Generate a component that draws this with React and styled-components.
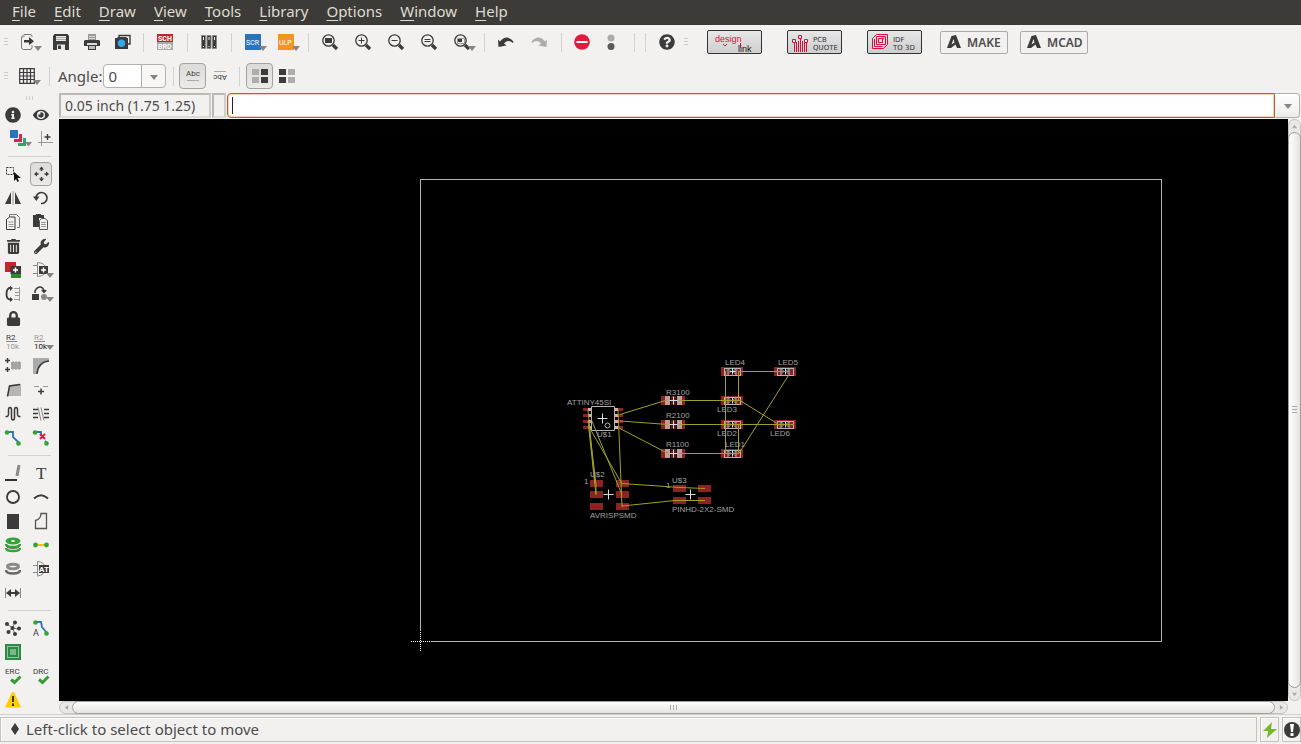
import React, { useState } from 'react';
import styled, { createGlobalStyle, css } from 'styled-components';
import { FaEye, FaInfoCircle, FaLock, FaQuestionCircle, FaTrashAlt, FaWrench } from 'react-icons/fa';

const GlobalStyle = createGlobalStyle`
	html, body, #root {
		height: 100%;
	}
	body {
		margin: 0;
		background: #f2f1f0;
		color: #4c4c4c;
		font-family: "Noto Sans", "Open Sans", sans-serif;
		font-size: 15px;
	}
	* {
		box-sizing: border-box;
	}
	button, input, select {
		font: inherit;
		color: inherit;
	}
	button {
		padding: 0;
		border: none;
		background: none;
	}
	svg {
		display: block;
		flex: none;
		overflow: visible;
	}
`;

const Window = styled.div`
	display: flex;
	flex-direction: column;
	height: 100vh;
	overflow: hidden;
`;

const MenuBar = styled.nav`
	display: flex;
	flex: none;
	height: 25px;
	padding: 0 0 2px 3px;
	background: #3c3b37;
	color: #dfdbd2;
`;

const MenuItem = styled.button`
	padding: 0 9px;
	line-height: 23px;
	u {
		text-underline-offset: 3px;
	}
`;

const ToolBar = styled.div`
	display: flex;
	flex: none;
	align-items: center;
	height: 34px;
	padding-left: 4px;
`;

const Grip = styled.div`
	width: 4px;
	height: 8px;
	margin-right: ${(p) => p.$space || 0}px;
	background: repeating-linear-gradient(#cfcdca 0 1px, #f2f1f0 1px 3px);
`;

const Separator = styled.div`
	width: 1px;
	height: 19px;
	margin: 0 ${(p) => p.$gap || 5}px;
	background: #d3d1cf;
`;

const pressedLook = css`
	border: 1px solid #a5a29e;
	border-radius: 4px;
	background: linear-gradient(#dddbd9, #ebeae8);
`;

const ToolButton = styled.button`
	position: relative;
	display: flex;
	flex: none;
	align-items: center;
	width: ${(p) => (p.$tight ? 31 : 33)}px;
	height: 26px;
	padding-left: 8px;
`;

const Toggle = styled.button`
	display: flex;
	align-items: center;
	justify-content: center;
	width: 27px;
	height: 26px;
	${(p) => p.$pressed && pressedLook}
`;

const Arrow = styled.span`
	position: absolute;
	right: ${(p) => p.$right}px;
	bottom: ${(p) => p.$bottom}px;
	border: 4px solid transparent;
	border-top: 5px solid #858481;
	border-bottom: none;
`;

const AngleLabel = styled.label`
	display: flex;
	align-items: center;
	padding-left: 3px;
`;

const AngleBox = styled.span`
	position: relative;
	display: flex;
	align-items: center;
	width: 63px;
	height: 24px;
	margin: 0 2px 0 1px;
	border: 1px solid #b4b1ad;
	border-radius: 4px;
	background: linear-gradient(90deg, #fff 37px, #b4b1ad 37px 38px, #f7f6f5 38px);
	select {
		width: 100%;
		height: 22px;
		padding: 0 4px;
		border: none;
		background: none;
		appearance: none;
		outline: none;
	}
`;

const BadgeButton = styled.button`
	width: 55px;
	height: 24px;
	margin-left: ${(p) => p.$gap}px;
	border: 1px solid #333;
	border-radius: 2px;
	background: linear-gradient(#e6e6e6, #cfcfcf);
`;

const PlainButton = styled.button`
	display: flex;
	align-items: center;
	gap: 5px;
	width: 68px;
	height: 23px;
	margin-left: ${(p) => p.$gap}px;
	padding-left: 6px;
	border: 1px solid #adabaa;
	border-radius: 2px;
	font: 600 12px "Noto Sans", sans-serif;
`;

const Body = styled.div`
	display: flex;
	flex: 1;
	min-height: 0;
`;

const Side = styled.aside`
	flex: none;
	width: 59px;
	padding-top: 3px;
`;

const SideGrip = styled.div`
	width: 8px;
	height: 4px;
	margin: 0 0 3px 26px;
	background: repeating-linear-gradient(90deg, #cfcdca 0 1px, #f2f1f0 1px 3px);
`;

const ToolGrid = styled.div`
	display: grid;
	grid-template-columns: 28px 28px;
`;

const SideRule = styled.hr`
	height: 1px;
	margin: 5px 8px;
	border: none;
	background: #d3d1cf;
`;

const SideButton = styled.button`
	position: relative;
	display: flex;
	align-items: center;
	justify-content: center;
	width: 22px;
	height: 24px;
	margin-left: 2px;
	${(p) => p.$pressed && pressedLook}
`;

const Main = styled.main`
	display: flex;
	flex: 1;
	flex-direction: column;
	min-width: 0;
`;

const CommandRow = styled.div`
	display: flex;
	flex: none;
	gap: 1px;
	height: 26px;
	padding-right: 1px;
`;

const Sunken = styled.div`
	width: ${(p) => p.$width}px;
	height: 25px;
	padding-left: 4px;
	border: 2px solid;
	border-color: #bbb9b6 #cfcdca #dbd9d7 #bbb9b6;
	font-size: 14px;
	line-height: 22px;
	white-space: nowrap;
`;

const CommandBox = styled.div`
	display: flex;
	flex: 1;
	height: 25px;
`;

const CommandField = styled.label`
	display: flex;
	flex: 1;
	align-items: center;
	padding-left: 4px;
	border: 1px solid #c9572f;
	border-radius: 4px 0 0 4px;
	background: #fff;
	box-shadow: inset 0 0 0 1px #f8cdb9;
	input {
		flex: 1;
		height: 20px;
		padding: 0;
		border: none;
		outline: none;
		background: none;
	}
`;

const Caret = styled.span`
	width: 1px;
	height: 17px;
	background: #222;
`;

const HistoryButton = styled.button`
	position: relative;
	width: 25px;
	border: 1px solid #b4b1ad;
	border-left: none;
	border-radius: 0 4px 4px 0;
	background: linear-gradient(#fff, #edeceb);
`;

const Workspace = styled.div`
	display: grid;
	flex: 1;
	grid-template: minmax(0, 1fr) 13px / minmax(0, 1fr) 13px;
	min-height: 0;
`;

const Canvas = styled.div`
	overflow: hidden;
	background: #000;
	svg {
		width: 100%;
		height: 100%;
	}
`;

const ScrollTrack = styled.div`
	display: flex;
	flex-direction: ${(p) => (p.$vertical ? 'column' : 'row')};
	border: 1px solid #c4c1be;
	border-radius: 7px;
	background: #eae8e6;
`;

const ScrollEnd = styled.button`
	display: flex;
	align-items: center;
	justify-content: center;
	flex: 0 0 12px;
`;

const ScrollThumb = styled.div`
	display: flex;
	flex: 1;
	align-items: center;
	justify-content: center;
	margin: ${(p) => (p.$vertical ? '0 -1px' : '-1px 0')};
	border: 1px solid #a29f9b;
	border-radius: 7px;
	background: linear-gradient(${(p) => (p.$vertical ? '90deg' : '180deg')}, #fff, #e6e4e2);
	&::after {
		content: "";
		width: ${(p) => (p.$vertical ? 5 : 8)}px;
		height: ${(p) => (p.$vertical ? 8 : 5)}px;
		background: repeating-linear-gradient(${(p) => (p.$vertical ? '180deg' : '90deg')}, #aaa 0 1px, transparent 1px 3px);
	}
`;

const StatusBar = styled.footer`
	display: flex;
	flex: none;
	gap: 3px;
	height: 30px;
	padding: 2px 0;
	border-top: 1px solid #d3d1cf;
`;

const StatusCell = styled.div`
	display: flex;
	flex: ${(p) => (p.$grow ? 1 : 'none')};
	align-items: center;
	justify-content: ${(p) => (p.$grow ? 'flex-start' : 'center')};
	gap: 6px;
	width: ${(p) => (p.$grow ? 'auto' : '19px')};
	padding: ${(p) => (p.$grow ? '0 0 2px 9px' : 0)};
	border: 1px solid #c4c1be;
	box-shadow: inset 1px 1px 0 #fff;
`;

const DARK = '#3b3b3b';
const GREEN = '#35a335';

const Icon = ({ children }) => (
	<svg width="16" height="16" viewBox="0 0 16 16" fill="none" stroke={DARK}>{children}</svg>
);

const Fill = ({ d, c = DARK }) => <path d={d} fill={c} stroke="none" />;

const Dot = ({ x, y, r, c = DARK }) => <circle cx={x} cy={y} r={r} fill={c} stroke="none" />;

const Txt = ({ x, y, size = 8, c = DARK, children, ...rest }) => (
	<text x={x} y={y} fontSize={size} fill={c} stroke="none" fontFamily="Roboto, sans-serif" {...rest}>{children}</text>
);

const Magnifier = ({ children }) => (
	<Icon>
		<circle cx="6.500" cy="6.500" r="5.700" strokeWidth="1.300" />
		<path d="M11 11l4 4" strokeWidth="3.200" />
		{children}
	</Icon>
);

const Pixels = ({ left, right }) => (
	<Icon>
		<Fill c={left} d="M0 1h7v6H0zM0 9h7v6H0z" />
		<Fill c={right} d="M9 1h7v6H9zM9 9h7v6H9z" />
	</Icon>
);

const Check = () => <path d="M6 11.500l3.500 3 6-6" stroke="#3a9a3a" strokeWidth="3" />;

const icons = {
	open: <Icon><path d="M12 3V2.500Q12 .500 10 .500H4L1.500 3v10q0 2.500 2 2.500H10q2 0 2-2V11" stroke="#777" /><path d="M4 .500V3H1.500" stroke="#999" /><Fill d="M4 6h5V3l5 4.200-5 4V8.500H4z" /></Icon>,
	save: <Icon><Fill d="M1.500 0h13L16 2v14H0V2z" /><Fill c="#e8e8e8" d="M3 2h10v5H3zM4 10.500h8V16H4z" /><Fill d="M5 11.500h3V15H5z" /><Fill c="#aaa" d="M3 3h10v1H3zM3 5h10v1H3z" /></Icon>,
	print: <Icon><Fill c="#999" d="M4 0h8v6H4z" /><path d="M5 2.500h6M5 4.500h6" stroke="#ddd" /><Fill d="M1 6h14l1 1v5H0V7z" /><Fill c="#ddd" d="M3 9h10v2H3z" /><Fill d="M4 11h8v5H4z" /><Fill c="#bbb" d="M5 12h6v3H5z" /></Icon>,
	cam: <Icon><path d="M4 3V1.500h11V10h-2" strokeWidth="1.400" /><Fill d="M2 4l1-1h8l1 1h1v11H0V4z" /><Dot x={6.5} y={9.2} r={3.7} c="#35a6e6" /></Icon>,
	board: <Icon><Fill c="#c4242b" d="M0 0h16v8H0z" /><Fill c="#a8a8a8" d="M0 8h16v8H0z" /><Txt x="1" y="7" size="7" c="#fff" fontWeight="bold">SCH</Txt><Txt x="1" y="15" size="7" c="#fff" fontWeight="bold">BRD</Txt></Icon>,
	library: <Icon><path d="M.500 1.500h4v13h-4zM6 1.500h4v13H6zM11.500 1.500h4v13h-4z" fill={DARK} stroke="#8a8a8a" /><Fill c="#eee" d="M2 3h1v3H2zM7.500 3h1v3h-1zM13 3h1v3h-1zM2 12h1v1H2zM7.500 12h1v1h-1zM13 12h1v1h-1z" /></Icon>,
	scr: <Icon><Fill c="#2a73bd" d="M0 0h16v16H0z" /><Txt x="1" y="11" size="7" c="#fff">SCR</Txt></Icon>,
	ulp: <Icon><Fill c="#f7941e" d="M0 0h16v16H0z" /><Txt x="1" y="11" size="7" c="#fff">ULP</Txt></Icon>,
	zoomFit: <Magnifier><Fill d="M3 4h7v5H3z" /></Magnifier>,
	zoomIn: <Magnifier><path d="M6.500 3.500v6M3.500 6.500h6" /></Magnifier>,
	zoomOut: <Magnifier><path d="M3.500 6.500h6" /></Magnifier>,
	redraw: <Magnifier><path d="M3.500 5.500h6M3.500 7.500h6" /></Magnifier>,
	zoomSelect: <Magnifier><path d="M3.500 4.500h7v5h-7z" stroke="#999" /><Fill d="M4 5h4v3H4z" /></Magnifier>,
	undo: <Icon><Fill d="M0 5.500l2 2Q8.500-.500 15.500 7.500L15 9Q10 5 6 9.500l2.500 2L.500 13z" /></Icon>,
	redo: <Icon><Fill c="#adadad" d="M16 5.500l-2 2Q7.500-.500.500 7.500L1 9Q6 5 10 9.500l-2.500 2 8 1.500z" /></Icon>,
	stop: <Icon><Dot x={7} y={8} r={7.8} c="#e01b3c" /><Fill c="#fff" d="M1.500 7h11v2h-11z" /></Icon>,
	go: <Icon><Dot x={5} y={4} r={3.5} c="#ababab" /><Dot x={5} y={12.5} r={3.5} c="#5a5a5a" /></Icon>,
	help: <FaQuestionCircle size={16} color={DARK} />,
	grid: <Icon><path d="M.700.700h14.600v14.600H.700zM4.500 0v16M8 0v16M11.500 0v16M0 4.500h16M0 8h16M0 11.500h16" strokeWidth="1.200" /></Icon>,
	upright: <Icon><Txt x="1" y="8">Abc</Txt><path d="M2 12.500h12" stroke="#aaa" /></Icon>,
	flipped: <Icon><g transform="rotate(180 8 8)"><Txt x="1" y="9">Abc</Txt><path d="M2 12.500h12" stroke="#aaa" /></g></Icon>,
	darkRight: <Pixels left="#adadad" right={DARK} />,
	darkLeft: <Pixels left={DARK} right="#adadad" />,
	info: <FaInfoCircle size={16} color={DARK} />,
	show: <FaEye size={16} color={DARK} />,
	layers: <Icon><Fill c="#2a73bd" d="M5-1h8v8H5z" /><Fill c="#e0205c" d="M14 3h3v8H9V8h5z" /><Fill c="#2ea563" d="M18 7h3v8h-8v-3h5z" /><Fill c="#858481" d="M20 11h7l-3.500 4.500z" /></Icon>,
	mark: <Icon><path d="M8.500 0v15M5 11.500h15" stroke="#999" /><path d="M14.500 3v6M11.500 6h6" strokeWidth="1.400" /></Icon>,
	group: <Icon><path d="M1.500 1.500h7v7h-7z" strokeDasharray="2 1" /><Fill d="M9 6v9l2-2 1.500 3 1.500-1-1.500-3H16z" c="#111" /></Icon>,
	move: <Icon><Fill d="M8.500.500L11 3.500H9.300V5H7.700V3.500H6zM8.500 15.500L6 12.500h1.700V11h1.600v1.500H11zM1 8l3-2.500v1.700h1.500v1.600H4v1.700zM16 8l-3 2.500V8.800h-1.500V7.200H13V5.500z" /></Icon>,
	mirror: <Icon><Fill d="M6 2v12H0zM10 2v12h6z" /><path d="M8 1v14" stroke="#999" /></Icon>,
	rotate: <Icon><path d="M3 8.500A5.500 5.500 0 1 1 8 13.500" strokeWidth="1.600" /><Fill d="M0 6.500h6.500L3.300 11z" /></Icon>,
	copy: <Icon><path d="M4.500 3V.500h7l3 3v10H12" stroke="#777" /><path d="M1.500 5.500l3-2.500h5.500v12.500H1.500z" /><path d="M3.500 8h5M3.500 10.500h5M3.500 12.500h5" stroke="#999" /></Icon>,
	paste: <Icon><Fill d="M0 1h3V0h5v1h3v3H6v9H0z" /><path d="M14.500 6.500v9h-8v-9l2-2H12z" fill="#f2f1f0" stroke="#555" /><path d="M8 8.500h5M8 10.500h5M8 12.500h5" stroke="#999" /></Icon>,
	trash: <FaTrashAlt size={15} color={DARK} />,
	wrench: <FaWrench size={15} color={DARK} />,
	add: <Icon><Fill c="#c4242b" d="M0 0h11v10H0z" /><Fill c="#2c8a2c" d="M6 11h10v5H6z" /><Fill d="M5.500 4H16v8H5.500z" /><path d="M10.500 5.500v5M8 8h5" stroke="#fff" strokeWidth="1.500" /></Icon>,
	replace: <Icon><path d="M0 3.500h4M0 11.500h4M4.500.500v14M4.500.500Q13 1 13 7.500T4.500 14.500" stroke="#888" /><Fill d="M6 4h9v8H6z" /><path d="M10.500 5.500v5M8 8h5" stroke="#fff" strokeWidth="1.500" /></Icon>,
	pinSwap: <Icon><path d="M6 1.500Q1.500 2 1.500 8T6 13.500" strokeWidth="1.800" /><Fill d="M5 0l3 2-3 3zM5 11l3 2.500L5 16z" /><path d="M14.500 1v14M9 2.500h5M10 6.500h4M10 9.500h4M9 13.500h5" stroke="#999" /></Icon>,
	gateSwap: <Icon><path d="M2 7V5Q4 1 7 1T11 5" strokeWidth="1.600" /><Fill d="M8 4h6l-3 3.500zM-1 8h7v6h-7z" /><Dot x={11} y={11} r={3} c="#888" /></Icon>,
	lock: <FaLock size={15} color={DARK} />,
	name: <Icon><Txt x="1" y="6">R2</Txt><path d="M1 7.500h11" stroke="#888" /><Txt x="1" y="15" c="#999">10k</Txt></Icon>,
	value: <Icon><Txt x="1" y="6" c="#999">R2</Txt><path d="M1 7.500h11" stroke="#888" /><Txt x="1" y="15" c="#111">10k</Txt></Icon>,
	smash: <Icon><path d="M2.500 0v5M0 2.500h5M2.500 9v5M0 11.500h5" strokeWidth="1.500" /><Fill c="#aaa" d="M6 4h10v7H6z" /><path d="M8 3v9M11 3v9M14 3v9" stroke="#999" /></Icon>,
	miter: <Icon><Fill c="#ababab" d="M0 0h16v3Q5 4 4 16H0z" /><path d="M16 3Q5 4 4 16" strokeWidth="1.500" /></Icon>,
	split: <Icon><Fill c="#b5b5b5" d="M5 3l11-1v12H2z" /><path d="M2.500 14.500L4.500 4 15 2.500" strokeWidth="1.500" /></Icon>,
	optimize: <Icon><path d="M1 4.500h5M10 4.500h5" stroke="#999" /><path d="M8 6.500v6M5 9.500h6" strokeWidth="1.500" /></Icon>,
	meander: <Icon><path d="M.500 10.500Q3.500 11 3.500 8V4Q3.500 1.500 5 1.500T6.500 4v7.500Q6.500 14 8 14t1.500-2.500V4Q9.500 1.500 11 1.500T12.500 4v4q0 3 3 2.500" strokeWidth="1.500" /></Icon>,
	ripLines: <Icon><path d="M0 3.500h5M0 7.500h5M0 11.500h5M11 3.500h5M11 7.500h5M11 11.500h5" strokeWidth="1.400" /><path d="M5 1.500l3 13M8 1.500l3 13" stroke="#888" /></Icon>,
	route: <Icon><path d="M2 2h6v5l6 6" stroke="#2a73bd" strokeWidth="1.800" /><Dot x={2} y={2.5} r={2.3} c={GREEN} /><Dot x={13.5} y={13.5} r={2.3} c={GREEN} /></Icon>,
	ripup: <Icon><path d="M2 2h6v3M12 11l2 2" stroke="#2a73bd" strokeWidth="1.800" /><path d="M7 4l5 5M12 4L7 9" stroke="#dd1c3c" strokeWidth="2" /><Dot x={2} y={2.5} r={2.3} c={GREEN} /><Dot x={13.5} y={13.5} r={2.3} c={GREEN} /></Icon>,
	line: <Icon><path d="M0 15h12" stroke="#000" strokeWidth="1.600" /><path d="M14 0l-2 11" stroke="#8a8a8a" strokeWidth="3" /></Icon>,
	text: <Icon><text x="3" y="14" fontSize="17" fontFamily="Liberation Serif, serif" fill={DARK} stroke="none">T</text></Icon>,
	circle: <Icon><circle cx="8" cy="8" r="6" strokeWidth="1.800" /></Icon>,
	arc: <Icon><path d="M1 9.500q7-6.500 14 0" strokeWidth="2" /></Icon>,
	rect: <Icon><Fill d="M2 1h12v15H2z" /></Icon>,
	polygon: <Icon><path d="M8 .500h5.500v15h-11V7.500Q8 6 8 .500z" strokeWidth="1.300" stroke="#555" /></Icon>,
	via: <Icon><path d="M1 11q0 3 7 3t7-3M1 7q0 3 7 3t7-3" stroke={GREEN} strokeWidth="2.500" /><path d="M1 8.500q1 3 7 3t7-3" stroke="#666" /><ellipse cx="8" cy="4" rx="7.500" ry="3.500" fill={GREEN} stroke="none" /><ellipse cx="8" cy="4" rx="2" ry="1" fill="#f2f1f0" stroke="none" /></Icon>,
	signal: <Icon><path d="M3 8h10" stroke="#f5c400" strokeWidth="2" /><Dot x={2.5} y={8} r={2.4} c={GREEN} /><Dot x={13.5} y={8} r={2.4} c={GREEN} /></Icon>,
	hole: <Icon><path d="M1 9q0 3.500 7 3.500T15 9" stroke="#666" strokeWidth="2.500" /><ellipse cx="8" cy="5.500" rx="5.500" ry="2.200" stroke="#8a8a8a" strokeWidth="3" /></Icon>,
	attribute: <Icon><path d="M0 4.500h4M0 11.500h4M4.500.500v14M4.500.500Q12 1 12 7.500T4.500 15" stroke="#888" /><Fill d="M6 4h10v8H6z" /><Txt x="6" y="11" c="#fff" size="8" fontWeight="bold">AT</Txt></Icon>,
	dimension: <Icon><path d="M.500 3v10M15.500 3v10" stroke="#888" /><path d="M4 8h8" strokeWidth="2" /><Fill d="M1 8l5-4v8zM15 8l-5-4v8z" /></Icon>,
	ratsnest: <Icon><path d="M7.500 8L2 4M7.500 8L10 2M7.500 8l6 1M7.500 8l-4 4M7.500 8l2.500 6" stroke="#777" /><Dot x={2} y={4} r={2} /><Dot x={10} y={2.5} r={2} /><Dot x={14} y={8.5} r={2} /><Dot x={3.5} y={12} r={2} /><Dot x={10} y={14} r={2} /><Dot x={7.5} y={8} r={2} /></Icon>,
	autoroute: <Icon><path d="M2 2h6l1 5 5 6" stroke="#2a73bd" strokeWidth="1.800" /><Dot x={2.5} y={2.5} r={2.3} c={GREEN} /><Dot x={13.5} y={13.5} r={2.3} c={GREEN} /><Txt x="0" y="16" size="9">A</Txt></Icon>,
	board3d: <Icon><Fill c="#2a8a46" d="M0 0h16v16H0z" /><path d="M2.500 2.500h11v11h-11z" stroke="#fff" strokeDasharray="1 1" /><path d="M5 6h6M5 8h6M5 10h6M6 5v6M8 5v6M10 5v6" stroke="#b8dcc0" strokeWidth=".700" /></Icon>,
	erc: <Icon><Txt x="0" y="6">ERC</Txt><Check /></Icon>,
	drc: <Icon><Txt x="0" y="6">DRC</Txt><Check /></Icon>,
	errors: <Icon><Fill c="#fc0" d="M8 0q1 0 1.500 1L16 15.500H0L6.500 1Q7 0 8 0z" /><path d="M8 4v6M8 11.500V14" strokeWidth="2" /></Icon>,
};

const Autodesk = () => (
	<svg width="15" height="14" viewBox="0 0 15 14" fill={DARK}>
		<path d="M0 13L4.500 1 9 0l5 13h-4L8.500 9.500 4 13zM6.500 4L4.500 9.500l3-2z" fillRule="evenodd" />
	</svg>
);

const menus = ['File', 'Edit', 'Draw', 'View', 'Tools', 'Library', 'Options', 'Window', 'Help'];

// '|' is a separator, a trailing '+' marks a button with a drop-down
const topTools = ['open+', 'save', 'print', 'cam', '|', 'board', '|', 'library', '|', 'scr+', 'ulp+', '|',
	'zoomFit', 'zoomIn', 'zoomOut', 'redraw', 'zoomSelect+', '|', 'undo', 'redo', '|', 'stop', 'go', '|', '|', 'help'];
const tight = ['save', 'print', 'cam', 'stop', 'go'];

const sideTools = [
	['info', 'show', 'layers', 'mark'],
	['group', 'move', 'mirror', 'rotate', 'copy', 'paste', 'trash', 'wrench', 'add', 'replace+', 'pinSwap', 'gateSwap+',
		'lock', null, 'name', 'value+', 'smash', 'miter', 'split', 'optimize', 'meander', 'ripLines', 'route', 'ripup'],
	['line', 'text', 'circle', 'arc', 'rect', 'polygon', 'via', 'signal', 'hole', 'attribute', 'dimension'],
	['ratsnest', 'autoroute', 'board3d', null, 'erc', 'drc', 'errors'],
];

const COPPER = '#8c2222';
const SILK = '#b2b2b2';

const Cross = ({ x, y, r = 5 }) => <path d={`M${x - r} ${y}h${2 * r}M${x} ${y - r}v${2 * r}`} stroke="#ddd" />;

const Resistor = ({ x, y }) => (
	<g>
		<rect x={x - 12} y={y - 4.5} width="24" height="9" fill={COPPER} />
		<rect x={x - 8} y={y - 4.5} width="17" height="9" fill="#c59a9a" />
		<rect x={x - 3} y={y - 4.5} width="7" height="9" fill="#000" />
		<rect x={x - 2} y={y - 4.5} width="5" height="9" fill="#5c1818" />
		<Cross x={x + 0.5} y={y} r={4} />
	</g>
);

const Led = ({ x, y }) => (
	<g>
		<rect x={x - 11} y={y - 4.5} width="22" height="9" fill={COPPER} />
		<rect x={x - 3} y={y - 3} width="6" height="6" fill="#000" />
		<rect x={x - 7.5} y={y - 3} width="16" height="7" fill="none" stroke={SILK} />
		<path d={`M${x - 4} ${y - 3}v6M${x + 4} ${y - 3}v6M${x - 4} ${y + 3}l3-3-3-3M${x + 4} ${y - 3}l-3 3 3 3`} stroke={SILK} fill="none" />
		<Cross x={x + 0.5} y={y} r={3} />
	</g>
);

const Pads = ({ xs, ys, w, h }) => xs.map((x) => ys.map((y) => (
	<rect key={`${x} ${y}`} x={x} y={y} width={w} height={h} fill={COPPER} />
)));

const labels = [
	[567, 405, 'ATTINY45SI'], [597, 437, 'U$1'], [666, 395, 'R3100'], [666, 418, 'R2100'], [666, 447, 'R1100'],
	[725, 365, 'LED4'], [778, 365, 'LED5'], [717, 412, 'LED3'], [717, 436, 'LED2'], [770, 436, 'LED6'], [725, 447, 'LED1'],
	[590, 477, 'U$2'], [584, 484, '1'], [590, 518, 'AVRISPSMD'], [672, 483, 'U$3'], [666, 488, '1'], [672, 512, 'PINHD-2X2-SMD'],
];

const airWires = `
	M739 371.500H790M725.500 371V454M738.500 371V401M679 400.500H740L778 424M679 424.500H794M738.500 424V453
	M679 453.500H739L790 373M620 414.500L667 400M620 421L668 424.500M619 428L668 453.500M618 409L622 507
	M588 410L595 484M588 421L596 495M589 427L596 484V494M589 427L622 484M592 421L622 495
	M622 483.500L680 487.500 705 488.500M622 506L675 500.500H705`;

const Board = () => (
	<svg role="img" aria-label="Board layout">
		{/* shapes are stored in window coordinates */}
		<g transform="translate(-59 -119)" fontFamily="Liberation Sans, sans-serif" fontSize="8">
			<rect x="420.500" y="179.500" width="741" height="462" fill="none" stroke="#b4b4b4" />
			<path d="M411 641.500h20M420.500 631v20" stroke="#000" />
			<path d="M411 641.500h20M420.500 632v19" stroke="#fff" strokeDasharray="1 1" />
			<Pads xs={[583, 614]} ys={[408, 414, 420, 426]} w={9} h={3} />
			<Pads xs={[590, 616]} ys={[480, 491, 503]} w={13} h={7} />
			<Pads xs={[673, 698]} ys={[485, 497]} w={13} h={7} />
			<path d="M588 409.500h4M588 415.500h4M588 421.500h4M588 427.500h4M614 409.500h4M614 415.500h4M614 421.500h4M614 427.500h4" stroke="#d0b0b0" strokeWidth="3" />
			<path d="M591.500 406.500h23v24h-23z" fill="none" stroke={SILK} />
			<circle cx="607.500" cy="425.500" r="2.500" fill="none" stroke={SILK} />
			<Cross x={602.5} y={418.5} />
			<Cross x={608.5} y={494.5} />
			<Cross x={690.5} y={494.5} />
			{[400.5, 424.5, 453.5].map((y) => <Resistor key={y} x={673} y={y} />)}
			{[371.5, 400.5, 424.5, 453.5].map((y) => <Led key={y} x={732} y={y} />)}
			{[371.5, 424.5].map((y) => <Led key={y} x={785} y={y} />)}
			<path d={airWires} fill="none" stroke="#a0a028" />
			{labels.map(([x, y, name]) => <text key={x + name + y} x={x} y={y} fill="#a2a2a2">{name}</text>)}
		</g>
	</svg>
);

const Triangle = ({ turn }) => (
	<svg width="5" height="5" viewBox="0 0 6 6"><path d="M0 1h6L3 5z" fill="#aaa" transform={`rotate(${turn} 3 3)`} /></svg>
);

const SideTool = ({ tool, current, onPick }) => {
	if (!tool) return <span />;
	const id = tool.replace('+', '');
	return (
		<SideButton aria-label={id} $pressed={current === id} onClick={() => onPick(id)}>
			{icons[id]}
			{tool.endsWith('+') && <Arrow $right={-2} $bottom={4} />}
		</SideButton>
	);
};

function App() {
	const [tool, setTool] = useState('move');
	const [angle, setAngle] = useState('0');
	const [command, setCommand] = useState('');

	return (
		<Window>
			<GlobalStyle />
			<MenuBar>
				{menus.map((m) => <MenuItem key={m}><u>{m[0]}</u>{m.slice(1)}</MenuItem>)}
			</MenuBar>
			<ToolBar>
				<Grip $space={4} />
				{topTools.map((t, i) => {
					if (t === '|') return <Separator key={i} />;
					const id = t.replace('+', '');
					return (
						<ToolButton key={i} aria-label={id} $tight={tight.includes(id)}>
							{icons[id]}
							{t.endsWith('+') && <Arrow $right={3} $bottom={4} />}
						</ToolButton>
					);
				})}
				<Grip />
				<BadgeButton $gap={19} aria-label="design link">
					<svg width="53" height="22" fontFamily="Liberation Sans, sans-serif" fontSize="9">
						<text x="7" y="11" fill="#d8103c">design</text>
						<text x="30" y="21" fill="#111">link</text>
						<path d="M15 13l2 2 2-2M32.500 12v5" stroke="#d8103c" fill="none" />
					</svg>
				</BadgeButton>
				<BadgeButton $gap={25} aria-label="PCB quote">
					<svg width="53" height="22" fontFamily="DejaVu Sans, sans-serif" fontSize="7" fill="#333">
						<path d="M6.500 21v-9M8.500 21V11M10.500 21V10M12.500 21V7M14.500 21V10M16.500 21V11M18.500 21v-9" stroke="#d8103c" fill="none" />
						<path d="M4.500 8.500h3v3h-3zM10.500 4.500h3v3h-3zM16.500 8.500h3v3h-3z" stroke="#d8103c" fill="#fff" />
						<text x="25" y="11">PCB</text>
						<text x="25" y="19">QUOTE</text>
					</svg>
				</BadgeButton>
				<BadgeButton $gap={25} aria-label="IDF to 3D">
					<svg width="53" height="22" fontFamily="DejaVu Sans, sans-serif" fontSize="7" fill="#333">
						<path d="M4.500 7.500l4-4h11v10l-4 4h-11zM6.500 8v7.500h8M8.500 5.500h9v8h-9zM10.500 7.500h4v4h-4zM15 6v3" stroke="#d8103c" fill="none" />
						<text x="25" y="11">IDF</text>
						<text x="25" y="19">TO 3D</text>
					</svg>
				</BadgeButton>
				<PlainButton $gap={18}><Autodesk />MAKE</PlainButton>
				<PlainButton $gap={12}><Autodesk />MCAD</PlainButton>
			</ToolBar>
			<ToolBar>
				<Grip $space={3} />
				<ToolButton aria-label="grid">{icons.grid}<Arrow $right={3} $bottom={4} /></ToolButton>
				<Separator />
				<AngleLabel>
					Angle:
					<AngleBox>
						<select value={angle} onChange={(e) => setAngle(e.target.value)}>
							{['0', '45', '90', '135', '180'].map((a) => <option key={a}>{a}</option>)}
						</select>
						<Arrow $right={7} $bottom={7} />
					</AngleBox>
				</AngleLabel>
				<Separator />
				<Toggle $pressed aria-label="upright">{icons.upright}</Toggle>
				<Toggle aria-label="flipped">{icons.flipped}</Toggle>
				<Separator $gap={6} />
				<Toggle $pressed aria-label="dark right">{icons.darkRight}</Toggle>
				<Toggle aria-label="dark left">{icons.darkLeft}</Toggle>
			</ToolBar>
			<Body>
				<Side>
					<SideGrip />
					{sideTools.map((group, i) => (
						<React.Fragment key={i}>
							{i > 0 && <SideRule />}
							<ToolGrid>
								{group.map((t, j) => <SideTool key={j} tool={t} current={tool} onPick={setTool} />)}
							</ToolGrid>
						</React.Fragment>
					))}
				</Side>
				<Main>
					<CommandRow>
						<Sunken $width={152}>0.05 inch (1.75 1.25)</Sunken>
						<Sunken $width={14} />
						<CommandBox>
							<CommandField>
								<Caret />
								<input aria-label="Command line" value={command} onChange={(e) => setCommand(e.target.value)} />
							</CommandField>
							<HistoryButton aria-label="history"><Arrow $right={7} $bottom={8} /></HistoryButton>
						</CommandBox>
					</CommandRow>
					<Workspace>
						<Canvas><Board /></Canvas>
						<ScrollTrack $vertical>
							<ScrollEnd aria-label="up"><Triangle turn={180} /></ScrollEnd>
							<ScrollThumb $vertical />
							<ScrollEnd aria-label="down"><Triangle turn={0} /></ScrollEnd>
						</ScrollTrack>
						<ScrollTrack>
							<ScrollEnd aria-label="left"><Triangle turn={90} /></ScrollEnd>
							<ScrollThumb />
							<ScrollEnd aria-label="right"><Triangle turn={-90} /></ScrollEnd>
						</ScrollTrack>
					</Workspace>
				</Main>
			</Body>
			<StatusBar>
				<StatusCell $grow>
					<svg width="10" height="12" viewBox="0 0 10 12"><path d="M5 0l4 6-4 6-4-6z" fill={DARK} /></svg>
					Left-click to select object to move
				</StatusCell>
				<StatusCell>
					<svg width="14" height="16" viewBox="0 0 14 16"><path d="M9 0L0 9h5l-1 7 10-9H8z" fill="#76b82a" /></svg>
				</StatusCell>
				<StatusCell>
					<svg width="16" height="16" viewBox="0 0 16 16"><circle cx="8" cy="8" r="8" fill={DARK} /><path d="M6 2h4L9 10H7zM6.500 11h3v3h-3z" fill="#fff" /></svg>
				</StatusCell>
			</StatusBar>
		</Window>
	);
}

export default App;
